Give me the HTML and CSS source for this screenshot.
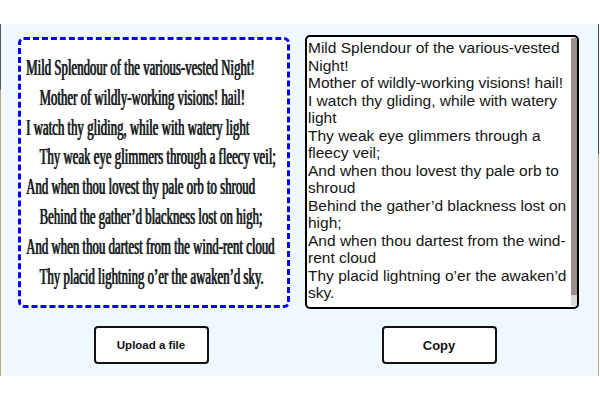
FILE: index.html
```html
<!DOCTYPE html>
<html lang="en">
<head>
<meta charset="utf-8">
<title>Poem OCR</title>
<link rel="stylesheet" href="styles.css">
</head>
<body>
<main class="panel">
  <div class="workspace">
    <div class="scan-box">
      <div class="scan">
        <div class="scan-line">Mild Splendour of the various-vested Night!</div>
        <div class="scan-line indent">Mother of wildly-working visions! hail!</div>
        <div class="scan-line">I watch thy gliding, while with watery light</div>
        <div class="scan-line indent">Thy weak eye glimmers through a fleecy veil;</div>
        <div class="scan-line">And when thou lovest thy pale orb to shroud</div>
        <div class="scan-line indent">Behind the gather’d blackness lost on high;</div>
        <div class="scan-line">And when thou dartest from the wind-rent cloud</div>
        <div class="scan-line indent">Thy placid lightning o’er the awaken’d sky.</div>
      </div>
    </div>
    <div class="output">
      <div class="output-text">Mild Splendour of the various-vested Night!<br>Mother of wildly-working visions! hail!<br>I watch thy gliding, while with watery light<br>Thy weak eye glimmers through a fleecy veil;<br>And when thou lovest thy pale orb to shroud<br>Behind the gather’d blackness lost on high;<br>And when thou dartest from the wind-rent cloud<br>Thy placid lightning o’er the awaken’d sky.</div>
      <div class="scrollbar"><div class="thumb"></div><div class="track"></div></div>
    </div>
    <div class="btn-cell"><button class="btn btn-upload">Upload a file</button></div>
    <div class="btn-cell"><button class="btn btn-copy">Copy</button></div>
  </div>
</main>
</body>
</html>
```
FILE: styles.css
```css
html, body {
  margin: 0;
  padding: 0;
  background: #ffffff;
}

.panel {
  box-sizing: border-box;
  width: 599px;
  height: 352px;
  margin-top: 24px;
  padding: 11px 20px 0 18px;
  background:
    linear-gradient(#5a5a5a 0 66px, #b3ab7c 66px) left top / 1px 100% no-repeat,
    linear-gradient(#4a4a4a 0 130px, #b3ab7c 130px) right top / 1px 100% no-repeat,
    #f0f8ff;
}

.workspace {
  display: grid;
  grid-template-columns: 272px 274px;
  column-gap: 15px;
  row-gap: 17px;
  align-items: start;
}

.scan-box {
  box-sizing: border-box;
  height: 271px;
  margin-top: 2px;
  border: 3px dashed #0000ff;
  border-radius: 6px;
  background: #ffffff;
  padding: 13px 0 0 5px;
  overflow: hidden;
}

.scan {
  transform: scaleX(0.535);
  transform-origin: left top;
  font-family: "Liberation Serif", "Times New Roman", serif;
  font-size: 24px;
  line-height: 29.8px;
  color: #202020;
  text-shadow: 0.8px 0 0 #2a2a2a, 0 0 1.2px rgba(0, 0, 0, 0.6);
  white-space: nowrap;
}

.scan-line.indent {
  padding-left: 25px;
}

.output {
  box-sizing: border-box;
  height: 274px;
  display: flex;
  border: 2px solid #000000;
  border-radius: 5px;
  background: #ffffff;
  overflow: hidden;
}

.output-text {
  flex: 1;
  padding: 2px 0 0 1px;
  font-family: "Liberation Sans", Arial, sans-serif;
  font-size: 15.5px;
  line-height: 17.5px;
  color: #141414;
  overflow: hidden;
}

.scrollbar {
  width: 6px;
  display: flex;
  flex-direction: column;
  padding: 1px 0 1px;
}

.thumb {
  flex: 1;
  background: #9d8d8d;
}

.track {
  height: 11px;
  background: #d9d9d9;
}

.btn-cell {
  display: flex;
  justify-content: center;
  padding-right: 6px;
}

.btn {
  box-sizing: border-box;
  width: 115px;
  height: 38px;
  border: 2px solid #111111;
  border-radius: 4px;
  background: #ffffff;
  color: #111111;
  font-family: "Liberation Sans", Arial, sans-serif;
  font-weight: bold;
  padding: 0;
}

.btn-upload {
  font-size: 11.5px;
}

.btn-copy {
  font-size: 13px;
}
```
